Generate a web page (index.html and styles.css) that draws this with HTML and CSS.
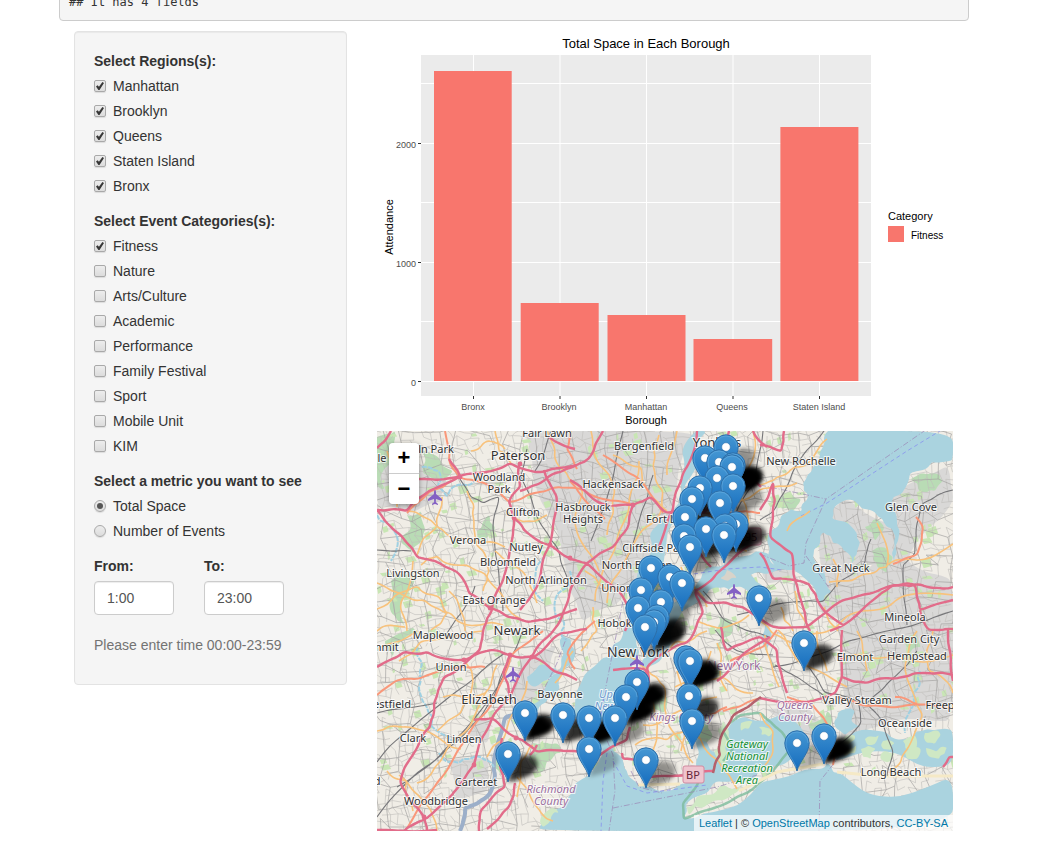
FILE: index.html
```html
<!DOCTYPE html>
<html lang="en">
<head>
<meta charset="utf-8">
<title>Total Space in Each Borough</title>
<link rel="stylesheet" href="styles.css">
</head>
<body>
<div class="page">
  <pre class="output">## It has 4 fields</pre>
  <div class="row">
    <form class="sidebar">
      <fieldset class="group">
        <legend>Select Regions(s):</legend>
        <label class="option"><input type="checkbox" checked>Manhattan</label>
        <label class="option"><input type="checkbox" checked>Brooklyn</label>
        <label class="option"><input type="checkbox" checked>Queens</label>
        <label class="option"><input type="checkbox" checked>Staten Island</label>
        <label class="option"><input type="checkbox" checked>Bronx</label>
      </fieldset>
      <fieldset class="group">
        <legend>Select Event Categories(s):</legend>
        <label class="option"><input type="checkbox" checked>Fitness</label>
        <label class="option"><input type="checkbox">Nature</label>
        <label class="option"><input type="checkbox">Arts/Culture</label>
        <label class="option"><input type="checkbox">Academic</label>
        <label class="option"><input type="checkbox">Performance</label>
        <label class="option"><input type="checkbox">Family Festival</label>
        <label class="option"><input type="checkbox">Sport</label>
        <label class="option"><input type="checkbox">Mobile Unit</label>
        <label class="option"><input type="checkbox">KIM</label>
      </fieldset>
      <fieldset class="group">
        <legend>Select a metric you want to see</legend>
        <label class="option"><input type="radio" name="metric" checked>Total Space</label>
        <label class="option"><input type="radio" name="metric">Number of Events</label>
      </fieldset>
      <div class="times">
        <div class="time"><label for="from">From:</label><input id="from" type="text" value="1:00"></div>
        <div class="time"><label for="to">To:</label><input id="to" type="text" value="23:00"></div>
      </div>
      <p class="help">Please enter time 00:00-23:59</p>
    </form>

    <main class="main">
      <svg class="chart" viewBox="0 0 576 400" role="img" aria-label="Total Space in Each Borough">
        <text class="chart-title" x="269" y="17">Total Space in Each Borough</text>
        <rect class="panel" x="44" y="24" width="450" height="341"/>
        <path class="grid" d="M44 52.500H494M44 171.500H494M44 290.500H494M44 112.500H494M44 231.500H494M44 350.500H494M96.500 24V365M183 24V365M269.500 24V365M356 24V365M442.500 24V365"/>
        <g class="bars">
          <rect x="57" y="40" width="77.700" height="310"/>
          <rect x="143.700" y="272" width="78" height="78"/>
          <rect x="230.500" y="284" width="78" height="66"/>
          <rect x="316.500" y="308" width="78.700" height="42"/>
          <rect x="403.400" y="96" width="78" height="254"/>
        </g>
        <path class="ticks" d="M41 112.500H44M41 231.500H44M41 350.500H44M96.500 365V368M183 365V368M269.500 365V368M356 365V368M442.500 365V368"/>
        <g class="axis-y"><text x="39" y="117">2000</text><text x="39" y="236">1000</text><text x="39" y="355">0</text></g>
        <g class="axis-x"><text x="96" y="379">Bronx</text><text x="182" y="379">Brooklyn</text><text x="269" y="379">Manhattan</text><text x="355" y="379">Queens</text><text x="442" y="379">Staten Island</text></g>
        <text class="axis-title" x="269" y="393">Borough</text>
        <text class="axis-title" transform="translate(16 196) rotate(-90)">Attendance</text>
        <text class="legend-title" x="511" y="189">Category</text>
        <g class="bars"><rect x="511" y="195" width="16" height="16"/></g>
        <text class="legend-item" x="534" y="208">Fitness</text>
      </svg>

      <div class="map">
        <svg class="map-canvas" viewBox="0 0 576 400" role="img" aria-label="Map of event locations">
          <defs>
            <linearGradient id="pin-fill" x1="0" y1="0" x2="0" y2="1"><stop offset="0" stop-color="#4597d3"/><stop offset="1" stop-color="#146bbd"/></linearGradient>
            <linearGradient id="shade" x1="0" y1="1" x2="1" y2="0"><stop offset="0" stop-color="#000"/><stop offset=".7" stop-color="#000"/><stop offset="1" stop-color="#000" stop-opacity=".6"/></linearGradient>
            <filter id="soft" x="-50%" y="-50%" width="200%" height="200%"><feGaussianBlur stdDeviation="2"/></filter>
            <g id="pin"><path d="M0 28C-2 19-12.200 10-12.200 0A12.200 12.200 0 0 1 12.200 0C12.200 10 2 19 0 28Z" fill="url(#pin-fill)" stroke="#2e6fa9"/><path d="M-1 24C-4 16-11 9-11 0A11 11 0 0 1 11 0" fill="none" stroke="#6db2e2" stroke-opacity=".5"/><circle r="4.300" fill="#fff" stroke="#3273ae" stroke-width=".6"/></g>
            <path id="pin-shadow" d="M0 28C3 18 6 1 18 1C33 1 33 15 22 21C14 25 6 26 0 28Z" fill="url(#shade)" filter="url(#soft)"/>
            <path id="plane" d="M0-7C1-7 1-5 1-3L7 2V4L1 2L.8 5L3 7V8L0 7L-3 8V7L-.8 5L-1 2L-7 4V2L-1-3C-1-5-1-7 0-7Z" fill="#8461c4"/>
          </defs>

          <rect class="land" width="576" height="400"/>
          <g class="urban" data-rough="10">
            <path d="M148 0L318 0L300 55L286 122L236 176L205 190L190 150L180 100L160 60Z"/>
            <path d="M0 30L40 34L70 44L62 70L34 82L0 76Z"/>
            <path d="M438 100L470 68L508 92L520 60L570 35L576 70L530 130L576 150L576 245L530 270L465 260L466 190L440 176Z"/>
            <path d="M463 196L576 190L576 290L500 296L462 310Z"/>
            <path d="M145 228L180 214L172 266L148 282L134 262Z"/>
            <path d="M96 286L116 290L110 312L92 310Z"/>
            <path d="M72 330L112 326L110 360L78 368Z"/>
            <path d="M384 139L414 138L422 150L390 152Z"/>
            <path d="M390 278L430 276L452 298L438 324L420 306Z"/>
          </g>
          <g class="park" data-rough="25">
            <path d="M30 84L44 80L46 104L36 122L24 112Z"/><path d="M42 20L58 24L76 40L66 48L46 42Z"/>
            <path d="M0 6L18 0L22 24L8 58L0 54Z"/><path d="M14 150L24 142L38 150L28 196L14 182Z"/>
            <path d="M100 100L112 84L118 96L106 112Z"/><path d="M8 210L36 196L44 204L16 226Z"/>
            <path d="M120 316L138 320L136 336L124 344L116 336Z"/><path d="M156 312L180 312L184 322L170 330L160 344L152 330Z"/>
            <path d="M402 70L414 62L424 68L414 80L404 78Z"/><path d="M488 96L500 88L506 100L498 110Z"/>
            <path d="M534 48L556 42L566 50L558 60L542 60Z"/><path d="M495 120L506 116L516 126L510 142L500 136Z"/>
            <path d="M276 258L290 266L286 282L274 278Z"/><path d="M316 286L330 286L336 306L328 314L320 306Z"/>
            <path d="M430 290L450 280L454 294L440 300Z"/><path d="M526 210L540 204L544 216L530 224Z"/>
            <path d="M340 184L356 192L350 206L338 200Z"/><path d="M280 140L284 138L268 178L264 176Z"/>
          </g>
          <g id="greens" class="green"></g>
          <path id="streets" class="street"/>
          <path id="avenues" class="avenue"/>

          <g class="water" data-rough="22">
            <path d="M451 0L446 16L436 36L426 52L431 66L425 80L414 78L403 89L394 99L391 124L413 139L426 146L443 172L455 162L440 134L437 118L446 101L456 112L471 122L475 133L480 120L480 102L455 88L463 72L476 69L498 81L510 96L517 110L518 133L521 110L520 89L516 66L533 42L546 39L566 31L576 29L576 0Z"/>
            <path d="M318 156L327 139L350 131L374 124L393 124L404 138L373 144L386 155L372 164L360 156L343 157L330 163L304 182L293 202L286 222L268 240L262 249L266 228L282 212L291 184L308 166Z"/>
            <path d="M319 0L330 0L315 44L304 83L288 122L268 170L260 204L254 236L262 249L248 270L246 288L238 304L236 320L244 326L250 340L263 354L303 353L320 340L317 306L330 311L342 324L352 296L368 286L403 284L426 299L418 323L390 334L362 350L318 366L307 386L330 382L384 351L443 338L450 332L466 344L576 345L576 400L162 400L178 379L195 362L218 336L226 320L216 310L222 292L197 286L161 288L161 284L198 278L207 244L235 226L246 204L251 172L270 130L292 84L306 44Z"/>
            <path d="M186 205L194 208L198 222L185 243L171 267L161 281L154 273L165 265L176 244L187 222Z"/>
            <path d="M150 246L162 234L180 238L166 250L156 256Z"/>
            <path d="M461 282L478 280L474 290L484 296L468 304L460 298Z"/><path d="M462 314L500 300L530 308L550 298L576 300L576 335L460 330Z"/>
            <path d="M388 194L394 210L388 220L385 205Z"/>
          </g>
          <g class="kill" data-rough="8"><path d="M161 284L128 286L119 320L118 344L110 366L88 377L83 400"/></g>
          <g class="creek" data-rough="25"><path d="M40 215L44 250L50 276L54 295L76 312M62 322L82 332L104 326L117 336M193 140L181 162L187 190L190 210M0 84L18 101L14 130M100 48L70 66L62 40L44 36M543 240L536 262L528 302M168 126L166 170"/></g>
          <g class="marsh" data-rough="30">
            <path d="M350 139L356 142L360 147L351 150L343 147Z" fill="#d8d3c9"/>
            <path d="M346 290L352 300L348 318L354 326L346 334L342 330L342 310Z"/><path d="M364 292L376 290L372 298L364 300Z"/><path d="M382 296L396 298L392 306L384 304Z"/>
            <path d="M468 306L478 304L474 311L466 313Z"/><path d="M488 308L502 304L498 313L490 314Z"/><path d="M506 310L518 312L514 319L506 318Z"/><path d="M526 310L538 304L540 315L528 317Z"/><path d="M548 302L564 304L558 313L550 312Z"/>
            <path d="M466 317L479 314L478 322L468 325Z"/><path d="M484 318L499 318L494 328L486 326Z"/><path d="M504 323L518 322L514 330L506 330Z"/><path d="M528 321L544 318L540 328L530 328Z"/><path d="M549 317L570 316L562 328L552 326Z"/>
            <path d="M310 376L324 364L368 354L362 360L330 374L312 384Z"/><path d="M164 386L174 377L182 382L172 392L166 396Z"/>
          </g>
          <g class="park-edge" data-rough="6"><path d="M320 337L322 350L306 372L307 388L334 378L370 362L394 342L416 316L404 300L384 282L363 284L346 300L356 318L346 330"/></g>
          <path class="beach" d="M261 354L303 353M362 360L400 341L446 333M460 341L500 345H576"/>
          <path class="boundary" d="M383 123L412 135L427 132L429 112L449 68L576 -20M383 54L449 68M429 125L453 158M248 160L230 250L222 290L236 324L238 360L232 400M236 377L340 356L380 344M442 400L443 350L462 326M254 340L262 356L285 362M192 200L180 232L164 264"/>
          <path class="ferry" d="M424 85L450 72L530 20L576 -8M236 330L250 355L270 362L330 354M310 144L350 138L383 136L405 139M230 322L226 350L224 400M228 260L222 298"/>

          <g class="rail" data-rough="6">
            <path d="M82 46L94 66L106 72L122 66L116 98L120 130L126 180M0 119L34 120M150 18L144 46L160 86L180 116L190 146M98 155L86 180L66 208M133 224L108 274L58 330L0 386M147 196L128 236L104 286L62 326L20 356M128 222L60 276L0 331M0 282L60 272M174 0L158 40M246 0L232 60L214 110"/>
            <path d="M447 0L416 40L398 78L383 89M576 59L546 72L540 92L538 122L526 134L530 194M494 108L488 132L462 151L446 171L400 173L360 184M576 180L520 198L470 210L396 236M398 234L420 246L448 266M432 236L448 262L490 272L504 288L516 320L510 345M490 272L520 244L540 220M482 274L484 292L458 316"/>
            <path d="M338 199L360 220L396 224M276 44L262 90L248 130M352 0L346 30L326 82M386 0L378 52L358 84M326 160L348 190L392 206"/>
          </g>
          <g class="primary" data-rough="14">
            <path d="M118 0L122 20L134 32M90 60L97 90L100 115L112 140L106 160M65 66L60 96L40 124M30 80L60 96L76 108L128 116M44 134L60 125L90 134L120 158L144 188M0 152L30 166L62 178L80 190L126 194M0 178L40 155L62 166L70 182L54 199M72 160L88 200M0 200L28 196M94 20L110 10L128 18"/>
            <path d="M170 0L182 36L206 60L198 94L222 140M214 0L220 30L238 60L230 104M262 30L252 80L232 130L218 170M282 4L276 34L286 60L276 92L248 130L230 172M236 24L264 36L272 62L290 80M300 0L290 44"/>
            <path d="M383 54L400 46L434 30L450 8M433 80L410 100M447 176L461 200M460 156L456 128M500 92L510 136L496 142L452 151M576 113L530 128L510 134M576 164L510 177L460 196L430 206M0 218L40 200M22 230L44 210L106 200M66 266L108 262M120 234L108 262L64 330L40 352M150 250L134 284L110 326M140 366L144 330L156 314M196 220L178 252"/>
            <path d="M246 226L270 238L288 256L292 296L316 332M270 238L298 210L330 200M266 294L298 282L340 266M258 314L290 309L308 300M316 300L342 330L360 358M340 212L350 260M298 256L346 246L376 262M266 322L272 344M383 282L396 300L396 320L388 334M320 190L350 196L372 184M401 199L420 230L470 256M418 160L430 194M388 204L402 256M462 230L510 226L576 224M540 200L530 248L546 284L525 325L512 342M383 190L410 210L430 216"/>
            <path d="M304 136L330 176M354 20L344 60L318 116M376 0L366 46M340 90L383 58L420 52M320 106L370 120M176 390L158 374L140 346M60 400L48 372L22 344"/>
            <path d="M10 20L24 50L20 76M36 130L24 170L30 200M130 80L152 90L170 84M118 120L136 134L152 150L160 172M208 140L226 156L244 160M216 176L220 200L204 220M0 300L24 296L50 300L84 318M10 340L30 350L36 380M88 230L96 250L84 282L60 300M276 270L280 300L276 340M300 240L310 270L304 320M334 220L326 250M404 176L416 200M440 200L450 240M480 200L490 240M556 200L552 240L576 262M360 60L372 90L376 114M328 60L340 84L334 110"/>
          </g>
          <g class="trunk" data-rough="8">
            <path d="M68 0L72 29L82 46L107 52L132 71L156 62L200 57L226 68L256 74M0 264L20 249L60 241L84 235L108 236M166 200L134 224L122 256L92 302L72 336L50 366L28 400M193 50L204 64L228 88M200 38L190 18L194 0M30 82L52 61L78 48M218 190L190 222L198 238"/>
            <path d="M326 82L368 80L383 82M539 86L546 96L540 124L516 133M460 266L490 275L530 274L576 278M456 334L456 304L434 272L410 266M346 280L380 268M324 286L350 276M400 199L386 216L353 230M226 24L260 46L286 82M540 273L518 266"/>
          </g>
          <g class="motorway" data-rough="8">
            <path d="M42 48L80 46L100 42L133 32L167 41L200 34L213 26L226 0M72 28L83 46M0 79L30 80L52 60L82 46M0 79L17 99L40 126L58 130L80 141L92 162L113 177L150 191L177 186L200 178M143 32L143 56L132 71L137 87L135 109L128 142L115 179L107 196L103 219L67 246L57 272L53 296L37 322L23 352L47 386L50 400"/>
            <path d="M137 87L147 99L173 114L193 127M167 39L180 66L173 114L160 156L143 179M200 34L178 42L155 55L143 60M172 6L198 18M14 0L0 17M193 49L220 71L256 74L273 66L290 82L326 82M256 74L251 96L236 116L210 132L193 159L177 199L155 226L133 266L115 287L97 334L73 366L47 389L27 400M193 128L210 132L240 158L254 184L248 200"/>
            <path d="M320 0L306 42L296 79L282 116M0 236L27 221L50 221L87 229L113 219L133 224L157 226L200 249M133 224L126 242L133 266M157 226L184 202L210 198M97 289L115 287L140 307L160 321L200 320L220 326L250 309L253 296M125 307L123 332L128 356L104 379L102 400M138 352L132 376L110 398M160 314L153 324M0 399L60 399"/>
            <path d="M245 322L246 328L270 331M273 346L316 344L336 340M236 239L268 238L272 252L270 236L286 222L310 212L326 182L318 160L340 142L383 109M318 158L330 172L366 176L396 196L430 196L466 169L496 162L530 152L556 157L576 156"/>
            <path d="M407 0L404 20L383 14M383 79L396 52L398 69L393 106L415 122L418 149L426 176L433 200M383 122L396 148L418 149L432 153L443 174L466 194M453 200L500 166L516 154L538 154L543 179L576 169M383 206L400 219L410 262M383 267L446 267L458 262L465 246L465 199M465 246L490 252L526 246L550 242L576 244M571 199L576 250M296 79L316 104L334 136M352 0L346 60L326 82M376 0L390 16M366 44L384 56M344 196L350 220L383 206M543 179L552 199L576 198M340 250L350 242L393 206M566 336L572 326L576 326"/>
          </g>
          <g class="parkway" data-rough="8"><path d="M336 342L343 324L343 309L356 284L384 266"/></g>
          <g id="junctions" class="junction"></g>

          <use href="#plane" x="58" y="66"/><use href="#plane" x="357" y="160"/><use href="#plane" x="136" y="243"/><use href="#plane" x="260" y="231"/>
          <g class="place">
            <text x="170" y="6">Fair Lawn</text><text x="59" y="22">ln Park</text><text x="5" y="31">le</text>
            <text x="122" y="50">Woodland</text><text x="122" y="62">Park</text><text x="146" y="85">Clifton</text>
            <text x="206" y="80">Hasbrouck</text><text x="206" y="92">Heights</text><text x="236" y="57">Hackensack</text>
            <text x="267" y="19">Bergenfield</text><text x="424" y="34">New Rochelle</text><text x="534" y="80">Glen Cove</text>
            <text x="464" y="141">Great Neck</text><text x="290" y="92">Fort Lee</text><text x="91" y="113">Verona</text>
            <text x="149" y="120">Nutley</text><text x="131" y="135">Bloomfield</text><text x="36" y="146">Livingston</text>
            <text x="169" y="153">North Arlington</text><text x="117" y="173">East Orange</text><text x="66" y="208">Maplewood</text>
            <text x="279" y="121">Cliffside Park</text><text x="260" y="138">North Bergen</text><text x="251" y="161">Union City</text>
            <text x="244" y="196">Hoboken</text><text x="8" y="220">mmit</text><text x="74" y="240">Union</text>
            <text x="183" y="267">Bayonne</text><text x="15" y="277">estfield</text><text x="36" y="311">Clark</text>
            <text x="87" y="312">Linden</text><text x="99" y="355">Carteret</text><text x="59" y="374">Woodbridge</text>
            <text x="0" y="354">d</text><text x="478" y="230">Elmont</text><text x="528" y="190">Mineola</text>
            <text x="532" y="212">Garden City</text><text x="540" y="229">Hempstead</text><text x="480" y="273">Valley Stream</text>
            <text x="563" y="278">Freep</text><text x="528" y="296">Oceanside</text><text x="514" y="345">Long Beach</text>
          </g>
          <g class="city"><text x="141" y="29">Paterson</text><text x="340" y="16">Yonkers</text><text x="140" y="204">Newark</text><text class="metropolis" x="261" y="226">New York</text><text x="112" y="273">Elizabeth</text></g>
          <g class="county"><text class="upright" x="357" y="239">New York</text><text x="174" y="362">Richmond</text><text x="174" y="374">County</text><text x="304" y="290">Kings County</text><text x="418" y="278">Queens</text><text x="418" y="290">County</text></g>
          <g class="bay"><text x="237" y="267">Upper</text><text x="240" y="279">New York</text></g>
          <g class="reserve"><text x="370" y="317">Gateway</text><text x="370" y="329">National</text><text x="370" y="341">Recreation</text><text x="370" y="353">Area</text></g>
          <rect class="shield" x="306" y="335" width="21" height="17" rx="2"/><text class="shield-text" x="316" y="348">BP</text>
          <rect class="shield" x="364" y="97" width="20" height="17" rx="2"/><text class="shield-text" x="374" y="110">95</text>
          <g id="shadows"></g>
          <g id="pins"></g>
        </svg>
        <div class="zoom"><button type="button" aria-label="Zoom in">+</button><button type="button" aria-label="Zoom out">−</button></div>
        <div class="attribution"><a href="#">Leaflet</a> | © <a href="#">OpenStreetMap</a> contributors, <a href="#">CC-BY-SA</a></div>
      </div>
    </main>
  </div>
</div>
<script src="map.js"></script>
</body>
</html>
```
FILE: styles.css
```css
* { box-sizing: border-box; }
body { margin: 0; padding-right: 29px; background: #fff; color: #333; font: 14px/20px "Liberation Sans", Arial, sans-serif; overflow-x: hidden; }
.page { max-width: 940px; margin: 0 auto; padding: 0 15px; }
.output { margin: -18px 0 10px; padding: 10px 9px 9px; border: 1px solid #ccc; border-radius: 4px; background: #f5f5f5; font: 12px/18px "DejaVu Sans Mono", monospace; }
.row { display: grid; grid-template-columns: minmax(0, 273fr) minmax(0, 576fr); align-items: start; gap: 30px; padding: 0 16px 0 15px; }
.sidebar { padding: 19px 19px 29px; border: 1px solid #e3e3e3; border-radius: 4px; background: #f5f5f5; box-shadow: inset 0 1px 1px rgba(0,0,0,.05); }
.group { margin: 0 0 15px; padding: 0; border: 0; min-width: 0; }
.group legend { padding: 0; font-weight: bold; }
.option { display: flex; align-items: center; gap: 7px; margin-top: 5px; }
.option input { appearance: none; width: 12px; height: 12px; margin: 0; border: 1px solid #a9a9a9; border-radius: 2px; background: linear-gradient(#ededed, #dcdcdc); box-shadow: 0 1px 1px rgba(0,0,0,.1); display: grid; place-items: center; }
.option input[type="radio"] { border-radius: 50%; }
.option input[type="checkbox"]:checked::before { content: ""; width: 8px; height: 8px; background: #383838; clip-path: polygon(0 55%, 20% 40%, 37% 58%, 80% 0, 100% 14%, 44% 100%, 30% 100%); }
.option input[type="radio"]:checked::before { content: ""; width: 6px; height: 6px; border-radius: 50%; background: #555; }
.times { display: flex; gap: 30px; }
.time { width: 80px; }
.time label { display: block; margin-bottom: 5px; font-weight: bold; }
.time input { display: block; width: 100%; height: 34px; padding: 6px 12px; border: 1px solid #ccc; border-radius: 4px; background: #fff; color: #555; font: inherit; box-shadow: inset 0 1px 1px rgba(0,0,0,.075); }
.help { margin: 20px 0 0; color: #737373; }

.chart, .map-canvas { display: block; width: 100%; height: auto; }
.chart { font-family: "Liberation Sans", Arial, sans-serif; }
.chart-title { font-size: 13px; text-anchor: middle; }
.axis-title { font-size: 11px; text-anchor: middle; }
.legend-title { font-size: 11px; }
.legend-item { font-size: 10px; }
.axis-x, .axis-y { font-size: 9px; fill: #4d4d4d; text-anchor: middle; }
.axis-y { text-anchor: end; }
.panel { fill: #ebebeb; }
.grid { stroke: #fff; }
.bars { fill: #f8766d; }
.ticks { stroke: #333; }

.map { position: relative; overflow: hidden; }
.map-canvas { font-family: "Noto Sans", sans-serif; }
.map-canvas path { stroke-linejoin: round; }
.land { fill: #f0ede6; }
.urban { fill: #d9d8d7; }
.park { fill: #b9dcb5; }
.green { fill: #c8e6b4; }
.street, .avenue, .rail, .primary, .trunk, .motorway, .parkway, .kill, .creek, .park-edge, .beach, .boundary, .ferry { fill: none; }
.street { stroke: #bfbdbb; stroke-width: .6; }
.avenue { stroke: #a5a3a2; stroke-width: .7; }
.water { fill: #aad3df; }
.kill { stroke: #9cafc9; stroke-width: 4; }
.creek { stroke: #9fd0e2; stroke-width: 2; stroke-dasharray: 5 1; }
.marsh { fill: #cfe8c4; }
.park-edge { stroke: #7dbb9c; stroke-width: 2.500; stroke-opacity: .8; }
.beach { stroke: #f5e9c6; stroke-width: 3; }
.boundary { stroke: #9a86b5; stroke-dasharray: 6 2 1 2; stroke-opacity: .7; }
.ferry { stroke: #8790ef; stroke-width: .8; stroke-dasharray: 4 3; }
.rail { stroke: #77777a; stroke-width: 1.100; }
.primary { stroke: #f8c27c; stroke-width: 1.600; }
.trunk { stroke: #f9987a; stroke-width: 2; }
.motorway { stroke: #e26c8a; stroke-width: 2.400; }
.parkway { stroke: #b5616c; stroke-width: 2.500; }
.junction { fill: #e26c8a; }
.place, .city, .county, .bay, .reserve { text-anchor: middle; font-size: 11px; fill: #333; stroke: rgba(255,255,255,.75); stroke-width: 2px; paint-order: stroke; }
.city { font-size: 13px; }
.metropolis { font-size: 14px; }
.county { fill: #9b70a0; font-style: italic; }
.upright { font-style: normal; font-size: 12px; }
.bay { fill: #6f9bce; font-style: italic; }
.reserve { fill: #179136; font-style: italic; }
.shield { fill: #efc5cf; stroke: #d18aa0; }
.shield-text { font-size: 11px; text-anchor: middle; fill: #67263a; }
.zoom { position: absolute; left: 12px; top: 12px; width: 30px; border-radius: 4px; overflow: hidden; box-shadow: 0 1px 5px rgba(0,0,0,.4); }
.zoom button { display: block; width: 30px; height: 30px; padding: 0; border: 0; background: #fff; color: #000; font: bold 22px/30px "Liberation Sans", sans-serif; }
.zoom button + button { height: 31px; border-top: 1px solid #ccc; }
.attribution { position: absolute; right: 0; bottom: 0; padding: 0 5px; background: rgba(255,255,255,.7); color: #333; font-size: 11px; line-height: 16px; white-space: nowrap; }
.attribution a { color: #0078a8; text-decoration: none; }
```
FILE: map.js
```js
const byId = id => document.getElementById(id);

// Small seeded generator, so the side streets are the same on every load.
let seed = 41;
const rand = () => (seed = (seed * 16807) % 2147483647) / 2147483647;

// A jittered lattice whose neighbouring points are joined at random.
function lattice(step, jitter, keep) {
  const cols = Math.ceil(576 / step) + 8;
  const rows = Math.ceil(400 / step) + 1;
  const at = [];
  for (let r = 0; r <= rows; r++) {
    at.push([]);
    for (let c = 0; c <= cols; c++) {
      at[r].push([c * step + (r * step) * 0.15 - 60 + (rand() - .5) * jitter, r * step + (rand() - .5) * jitter]);
    }
  }
  let d = '';
  const line = (a, b) => { d += `M${a[0].toFixed(1)} ${a[1].toFixed(1)}L${b[0].toFixed(1)} ${b[1].toFixed(1)}`; };
  for (let r = 0; r < rows; r++) {
    for (let c = 0; c < cols; c++) {
      if (rand() < keep) line(at[r][c], at[r][c + 1]);
      if (rand() < keep) line(at[r][c], at[r + 1][c]);
    }
  }
  return d;
}
byId('streets').setAttribute('d', lattice(7, 5, .6));
byId('avenues').setAttribute('d', lattice(17, 12, .75));

let greens = '';
for (let i = 0; i < 420; i++) {
  const x = rand() * 576, y = rand() * 345, w = 2 + rand() * 7, h = 2 + rand() * 6;
  greens += `<path d="M${x} ${y}l${w} ${-h / 3}l${w / 3} ${h}l${-w} ${h / 3}Z"/>`;
}
byId('greens').innerHTML = greens;

// Adds an off-line point to every long segment, then rounds the corners.
const onEdge = (a, b) => (a[0] === b[0] && (a[0] === 0 || a[0] === 576)) || (a[1] === b[1] && (a[1] === 0 || a[1] === 400));
function bend(a, b, rough, depth) {
  const dx = b[0] - a[0], dy = b[1] - a[1];
  if (depth === 0 || Math.hypot(dx, dy) < 7 || onEdge(a, b)) return [b];
  const k = (rand() - .5) * rough / 50;
  const m = [(a[0] + b[0]) / 2 - dy * k, (a[1] + b[1]) / 2 + dx * k];
  return [...bend(a, m, rough, depth - 1), ...bend(m, b, rough, depth - 1)];
}
function roughen(d, rough) {
  return d.split('M').filter(Boolean).map(part => {
    const closed = part.endsWith('Z');
    const src = part.replace('Z', '').split('L').map(p => p.trim().split(/\s+/).map(Number));
    if (closed) src.push(src[0]);
    let pts = [src[0]];
    for (let i = 1; i < src.length; i++) pts = pts.concat(bend(src[i - 1], src[i], rough, 2));
    let out = `M${pts[0].join(' ')}`;
    for (let i = 1; i < pts.length - 1; i++) {
      const [p, a, b] = [pts[i], pts[i - 1], pts[i + 1]];
      const near = q => `${(p[0] + (q[0] - p[0]) * .4).toFixed(1)} ${(p[1] + (q[1] - p[1]) * .4).toFixed(1)}`;
      out += `L${near(a)}Q${p.join(' ')} ${near(b)}`;
    }
    return `${out}L${pts[pts.length - 1].join(' ')}${closed ? 'Z' : ''}`;
  }).join('');
}
document.querySelectorAll('[data-rough]').forEach(group => {
  group.querySelectorAll('path').forEach(path => {
    path.setAttribute('d', roughen(path.getAttribute('d'), Number(group.dataset.rough)));
  });
});

byId('junctions').innerHTML = [[83, 46], [143, 33], [173, 114], [193, 127], [137, 87], [113, 177], [133, 224], [155, 226], [97, 334], [47, 386], [87, 229], [256, 74], [139, 307]]
  .map(([x, y]) => `<circle cx="${x}" cy="${y}" r="2.400"/>`).join('');

const pins = [
  [349, 16, 1], [328, 27, 1], [342, 31, 1], [356, 34, 3], [355, 36, 3], [340, 47, 1], [356, 55, 1], [323, 57, 1], [315, 68, 2], [343, 72, 1],
  [308, 86, 1], [359, 93, 2], [348, 95, 2], [329, 98, 2], [347, 104, 1], [307, 105, 1], [313, 116, 1],
  [274, 137, 1], [293, 146, 1], [305, 152, 1], [264, 159, 1], [284, 171, 1], [261, 177, 1], [280, 186, 2], [277, 191, 2], [268, 196, 1], [382, 167, 1],
  [427, 212, 2], [309, 227, 2], [313, 230, 3], [260, 251, 3], [249, 266, 3], [312, 265, 2],
  [148, 282, 3], [186, 284, 2], [212, 287, 3], [238, 287, 1], [315, 290, 1], [447, 305, 3], [420, 312, 0], [212, 318, 0], [131, 323, 2], [269, 329, 1]
];
byId('shadows').innerHTML = pins.map(([x, y, n]) =>
  `<use href="#pin-shadow" x="${x}" y="${y}" opacity="${[.25, .4, .8, 1][n]}"/>`).join('');
byId('pins').innerHTML = pins.map(([x, y]) => `<use href="#pin" x="${x}" y="${y}"/>`).join('');
```
